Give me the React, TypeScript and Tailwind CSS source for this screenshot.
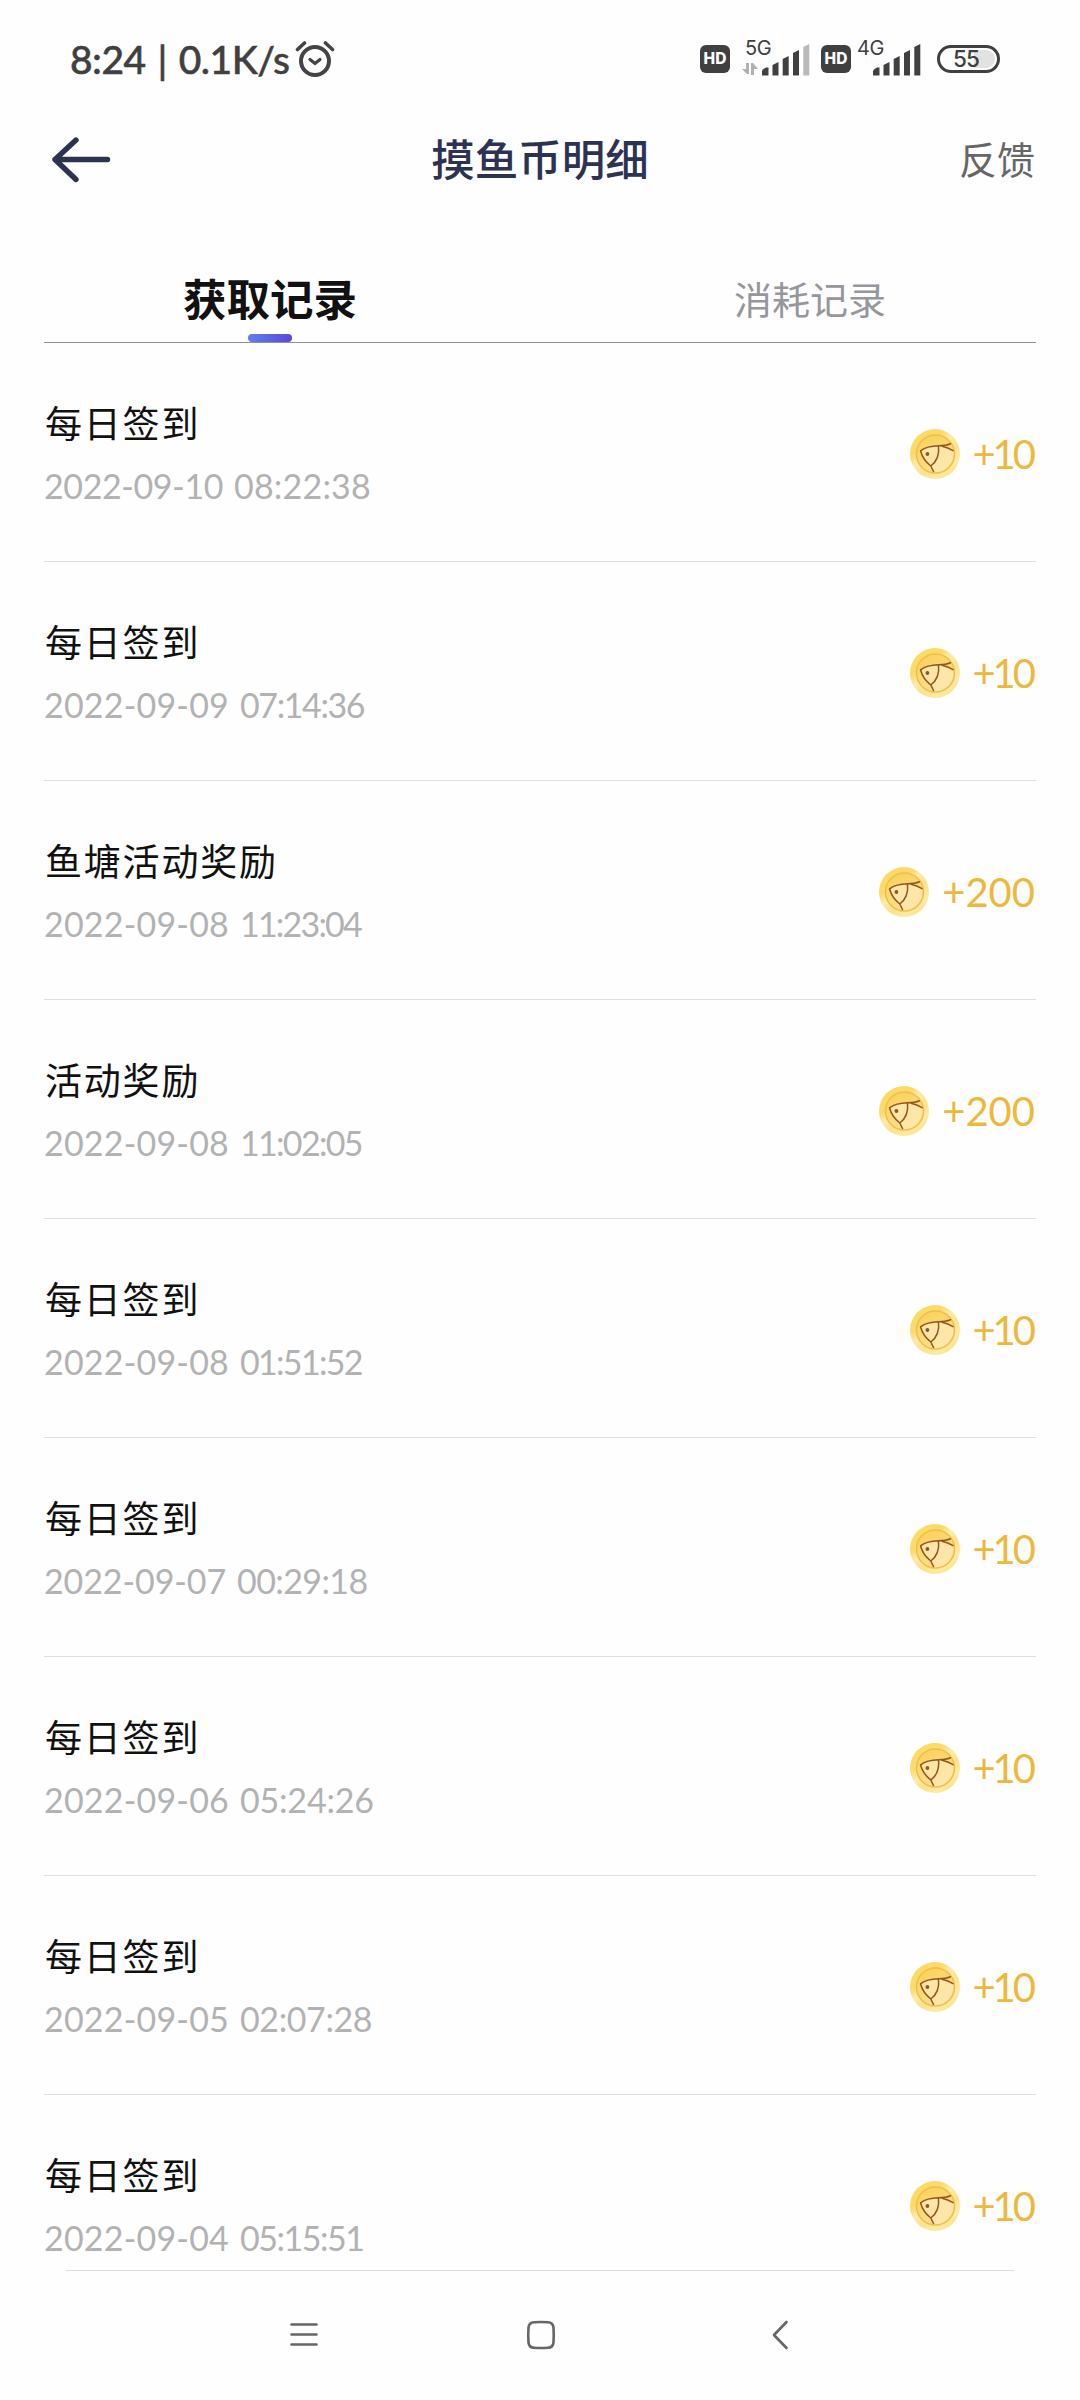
import React from "react";

type Entry = {
  title: string;
  date: string;
  time: string;
  amount: string;
  dateTracking: string;
  timeTracking: string;
};

const entries: Entry[] = [
  { title: "每日签到", date: "2022-09-10", time: "08:22:38", amount: "+10", dateTracking: "tracking-[-0.4px]", timeTracking: "tracking-[0.2px]" },
  { title: "每日签到", date: "2022-09-09", time: "07:14:36", amount: "+10", dateTracking: "tracking-[0.2px]", timeTracking: "tracking-[-1.4px]" },
  { title: "鱼塘活动奖励", date: "2022-09-08", time: "11:23:04", amount: "+200", dateTracking: "tracking-[0.2px]", timeTracking: "tracking-[-1.8px]" },
  { title: "活动奖励", date: "2022-09-08", time: "11:02:05", amount: "+200", dateTracking: "tracking-[0.2px]", timeTracking: "tracking-[-1.7px]" },
  { title: "每日签到", date: "2022-09-08", time: "01:51:52", amount: "+10", dateTracking: "tracking-[0.2px]", timeTracking: "tracking-[-1.7px]" },
  { title: "每日签到", date: "2022-09-07", time: "00:29:18", amount: "+10", dateTracking: "tracking-[-0.1px]", timeTracking: "tracking-[-0.6px]" },
  { title: "每日签到", date: "2022-09-06", time: "05:24:26", amount: "+10", dateTracking: "tracking-[0.2px]", timeTracking: "tracking-[-0.2px]" },
  { title: "每日签到", date: "2022-09-05", time: "02:07:28", amount: "+10", dateTracking: "tracking-[0.2px]", timeTracking: "tracking-[-0.4px]" },
  { title: "每日签到", date: "2022-09-04", time: "05:15:51", amount: "+10", dateTracking: "tracking-[0.2px]", timeTracking: "tracking-[-1.5px]" },
];

function AlarmIcon() {
  return (
    <svg className="ml-[8px] h-[38px] w-[40px]" viewBox="0 0 40 38" fill="none" stroke="#444" strokeWidth="4" strokeLinecap="round" strokeLinejoin="round">
      <circle cx="20" cy="21" r="14" />
      <path d="M15 19.500l5 4 5-4" strokeWidth="3.200" />
      <path d="M2.500 9.500l7-6.500M37.500 9.500l-7-6.500" strokeWidth="3.600" />
    </svg>
  );
}

function HdBadge() {
  return (
    <span className="flex h-[28px] w-[30px] items-center justify-center rounded-[6px] bg-[#404040] font-['Inter',sans-serif] text-[15.5px] font-extrabold leading-none text-white">
      HD
    </span>
  );
}

function Signal({ weak }: { weak?: boolean }) {
  return (
    <svg className="h-[32px] w-[48px]" viewBox="0 0 48 32" fill="#404040">
      <path d="M0 31v-4q1-2.500 4-3.500h2.500V31q0 .5-.5.5H.5Q0 31.500 0 31z" />
      <path d="M10.500 31V21l6-3V31q0 .5-.5.5h-5q-.5 0-.5-.5z" />
      <path d="M20.700 31V15l6-3V31q0 .5-.5.5h-5q-.5 0-.5-.5z" />
      <path d="M31 31V9l6-3V31q0 .5-.5.5h-5q-.5 0-.5-.5z" />
      <path d="M41.300 31V3l6-3V31q0 .5-.5.5h-5q-.5 0-.5-.5z" fill={weak ? "#b9b9b9" : "#404040"} />
    </svg>
  );
}

function StatusBar() {
  return (
    <div className="flex h-[120px] items-start pl-[70px] text-[#404040]">
      <div className="mt-[38px] flex w-[630px] items-center">
        <span className="w-[217px] whitespace-nowrap font-['Lato',sans-serif] text-[39px] font-medium leading-[42px] tracking-[-0.5px] [-webkit-text-stroke:0.5px_#404040] [word-spacing:2.5px]">8:24 | 0.1K/s</span>
        <AlarmIcon />
      </div>
      <div className="mt-[45px]"><HdBadge /></div>
      <div className="relative ml-[32px] mt-[44px] h-[32px]">
        <Signal weak />
        <span className="absolute -left-[17px] -top-[7px] font-['Inter',sans-serif] text-[20px] leading-[22px] tracking-[-0.5px]">5G</span>
        <svg className="absolute -left-[20px] top-[19px] h-[12px] w-[17px]" viewBox="0 0 17 12" fill="#b0b0b0">
          <path d="M4 0h3v11H5L0 6h4zM9 12h3V6h4L11 0H9z" />
        </svg>
      </div>
      <div className="ml-[11px] mt-[45px]"><HdBadge /></div>
      <div className="relative ml-[22px] mt-[44px] h-[32px]">
        <Signal />
        <span className="absolute -left-[16px] -top-[7px] font-['Inter',sans-serif] text-[20px] leading-[22px] tracking-[-0.5px]">4G</span>
      </div>
      <div className="ml-[16px] mt-[45px] flex h-[28px] w-[63px] items-center rounded-full border-[3px] border-[#404040] p-[2px]">
        <div className="flex h-full w-[54px] items-center justify-center rounded-full bg-[linear-gradient(90deg,#fefefe_60%,#e2e2e2_60%)] pr-[5px] font-['Inter',sans-serif] text-[22.5px] font-medium leading-none tracking-[-0.8px]">
          55
        </div>
      </div>
    </div>
  );
}

function Coin() {
  return (
    <svg className="h-[52px] w-[52px]" viewBox="0 0 52 52" fill="none">
      <defs>
        <linearGradient id="rim" x1="0.1" y1="0" x2="0.9" y2="1">
          <stop offset="0" stopColor="#fcdc62" />
          <stop offset="0.3" stopColor="#fbda68" />
          <stop offset="0.45" stopColor="#fdebac" />
          <stop offset="0.6" stopColor="#fce28a" />
          <stop offset="0.8" stopColor="#fdeaa2" />
          <stop offset="1" stopColor="#fbdc74" />
        </linearGradient>
        <linearGradient id="face" x1="0" y1="0" x2="0.4" y2="1">
          <stop offset="0" stopColor="#fad056" />
          <stop offset="1" stopColor="#fcdf8c" />
        </linearGradient>
      </defs>
      <circle cx="26" cy="26" r="25" fill="url(#rim)" />
      <circle cx="26.500" cy="26" r="19" fill="url(#face)" stroke="#efbe4a" strokeWidth="1.500" />
      <path d="M11.500 22.800Q18 18 29.500 17.800L44 22.500A18.500 18.500 0 0 1 26 44.300L21.800 38Q14 32 11.500 22.800z" fill="#fde6a8" />
      <path d="M24.500 43.500L21.800 38Q14 32 11.500 22.800Q18 18 29.500 17.800Q37 17.800 41.500 15.800M33 18.200Q39 19.500 44 22.600M29.500 18Q31 31 21.800 38" stroke="#94561f" strokeWidth="1.500" strokeLinecap="round" strokeLinejoin="round" />
      <circle cx="18.400" cy="26" r="1.900" fill="#8f5722" />
    </svg>
  );
}

function Row({ entry, last }: { entry: Entry; last: boolean }) {
  const short = entry.amount.length === 3;
  return (
    <li className={last ? "flex h-[219px] justify-between" : "flex h-[219px] justify-between border-b border-[#dfdfdf]"}>
      <div className="pt-[52px]">
        <div className="pl-[1px] text-[37px] leading-[54px] tracking-[1.8px] text-[#111]">{entry.title}</div>
        <div className="mt-[17px] flex gap-[11px] whitespace-nowrap font-['Lato',sans-serif] text-[34px] leading-[40px] text-[#b2b2b2]">
          <span className={entry.dateTracking}>{entry.date}</span>
          <span className={entry.timeTracking}>{entry.time}</span>
        </div>
      </div>
      <div className={short ? "flex h-[222px] items-center gap-[11px]" : "flex h-[222px] items-center gap-[12px]"}>
        <Coin />
        <span
          className={
            short
              ? "mr-[3px] font-['Lato',sans-serif] text-[40px] leading-[48px] tracking-[-3px] text-[#ecb93c]"
              : "mr-px font-['Lato',sans-serif] text-[40px] leading-[48px] text-[#ecb93c]"
          }
        >
          {entry.amount}
        </span>
      </div>
    </li>
  );
}

export default function App() {
  return (
    <div className="flex h-[2400px] w-[1080px] flex-col overflow-hidden bg-[#fefefe] font-['Noto_Sans_CJK_SC',sans-serif]">
      <StatusBar />
      <header className="grid h-[80px] shrink-0 grid-cols-[1fr_auto_1fr] items-center pl-[50px] pr-[45px]">
        <svg className="h-[48px] w-[62px]" viewBox="0 0 62 48" fill="none" stroke="#2c3352" strokeWidth="5.400" strokeLinecap="round" strokeLinejoin="round">
          <path d="M57.500 23.500H5M26 4L5 23.500 26 43.500" />
        </svg>
        <h1 className="-mt-[5px] -ml-[5px] text-[43.500px] font-medium leading-[60px] text-[#2c3352]">摸鱼币明细</h1>
        <span className="-mt-[4px] text-right text-[38px] leading-[54px] text-[#666]">反馈</span>
      </header>
      <nav className="mt-[52px] grid h-[90px] shrink-0 grid-cols-2">
        <div className="flex flex-col items-center justify-end">
          <span className="text-[43.500px] font-bold leading-[60px] text-[#111]">获取记录</span>
          <i className="mt-[6px] h-[8px] w-[44px] rounded-full bg-[linear-gradient(90deg,#5f80ee,#5a48dc)]" />
        </div>
        <div className="flex flex-col items-center justify-end pb-[17px] text-[38px] leading-[54px] text-[#96979b]">消耗记录</div>
      </nav>
      <div className="mx-[44px] h-px shrink-0 bg-[#8e8e94]" />
      <ul className="mx-[44px] h-[1927px] shrink-0 overflow-hidden">
        {entries.map((e, i) => (
          <Row key={e.date + e.time} entry={e} last={i === entries.length - 1} />
        ))}
      </ul>
      <footer className="mx-[66px] flex h-[130px] items-start border-t border-[#dcdcdc]">
        <svg className="ml-[223px] mt-[48px] h-[32px] w-[30px]" viewBox="0 0 30 32" stroke="#666" strokeWidth="2.600" strokeLinecap="round">
          <path d="M2.500 5.500h25M2.500 15.500h25M2.500 25.500h25" />
        </svg>
        <svg className="ml-[206px] mt-[48px] h-[32px] w-[32px]" viewBox="0 0 32 32" fill="none" stroke="#666" strokeWidth="2.600">
          <path d="M9 3.200Q16 2.700 23 3.200Q28 3.500 28.500 8.500Q29 16 28.500 23.500Q28 28.500 23 28.800Q16 29.300 9 28.800Q4 28.500 3.500 23.500Q3 16 3.500 8.500Q4 3.500 9 3.200Z" />
        </svg>
        <svg className="ml-[214px] mt-[48px] h-[32px] w-[20px]" viewBox="0 0 20 32" fill="none" stroke="#666" strokeWidth="2.600" strokeLinecap="round" strokeLinejoin="round">
          <path d="M15.500 3L3 16l12.500 13" />
        </svg>
      </footer>
    </div>
  );
}
